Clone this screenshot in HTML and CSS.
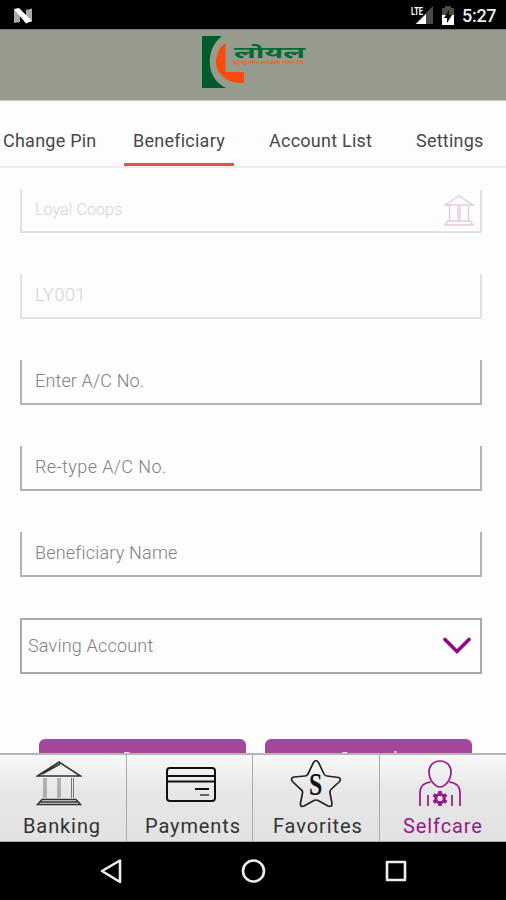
FILE: index.html
```html
<!DOCTYPE html>
<html lang="en">
<head>
<meta charset="utf-8">
<title>Beneficiary</title>
<link rel="stylesheet" href="styles.css">
</head>
<body>
<div class="status">
  <svg class="notif" width="20" height="16" viewBox="0 0 20 16"><path d="M1 1L7 5V14L1 15Z" fill="#aaa"/><path d="M13 2L19 .5V14L13 10Z" fill="#aaa"/><path d="M1 1L6 0L19 13L13 15.500Z" fill="#fff"/></svg>
  <svg width="72" height="20" viewBox="0 0 72 20">
    <path d="M23 0V18H5Z" fill="#484848"/><path d="M16 8V18H6Z" fill="#fff"/>
    <text class="lte" x="1" y="9" textLength="12" lengthAdjust="spacingAndGlyphs">LTE</text>
    <path d="M35 0H41V2H44V10H32V2H35Z" fill="#4a4a4a"/><path d="M32 9H44V19H32Z" fill="#fff"/><path d="M39 4L34 12H37V17L42 9H39Z" fill="#080808"/>
  </svg>
  <span class="clock">5:27</span>
</div>
<header class="brand">
  <svg width="108" height="58" viewBox="0 0 108 58">
    <path d="M2 2H22Q8 13 10 32Q12 47 26 54H2Z" fill="#005a2b"/>
    <path d="M25.500 9V38H44V49Q30 50 22 42Q15 35 16 25Q18 14 25.500 9Z" fill="#fa4a10"/>
    <text class="logo-name" x="34" y="24" textLength="71" lengthAdjust="spacingAndGlyphs">लोयल</text>
    <text class="logo-sub" x="33" y="30" textLength="72" lengthAdjust="spacingAndGlyphs">बहुउद्देश्यीय सहकारी संस्था लि.</text>
  </svg>
</header>
<nav class="tabs">
  <span class="tab pin">Change Pin</span><span class="tab ben">Beneficiary</span><span class="tab list">Account List</span><span class="tab set">Settings</span>
</nav>
<main class="form">
  <div class="field off first"><span class="f1">Loyal Coops</span>
    <svg width="30" height="32" viewBox="0 0 30 32" fill="none" stroke="#e4c8e0" stroke-width="1.300"><path d="M1 10L15 1L29 10ZM1 30H29L26 26H4ZM5.500 11V26M14 11V26M16 11V26M24.500 11V26"/></svg>
  </div>
  <div class="field off"><span class="f2">LY001</span></div>
  <div class="field"><span class="f3">Enter A/C No.</span></div>
  <div class="field"><span class="f4">Re-type A/C No.</span></div>
  <div class="field"><span class="f5">Beneficiary Name</span></div>
  <div class="select"><span>Saving Account</span>
    <svg width="28" height="18" viewBox="0 0 28 18"><path d="M2 2.500L14 14.500L26 2.500" fill="none" stroke="#8f0a86" stroke-width="3.600" stroke-linecap="round"/></svg>
  </div>
  <div class="actions"><div class="btn">Save</div><div class="btn">Cancel</div></div>
</main>
<footer class="bottom">
  <div class="item i1">
    <svg width="46" height="48" viewBox="0 0 46 48" fill="none" stroke="#333" stroke-width="1.500"><path d="M1.500 16L23 2L44.500 16ZM6 14L24 4M1.500 44.500H44.500L40 39.500H6ZM4 42H42"/><path d="M8 18V38M10 18V38M22 18V38M24 18V38M35.500 18V38M37.500 18V38" stroke="#777" stroke-width="1"/></svg>
    <span>Banking</span>
  </div>
  <div class="item i2">
    <svg width="50" height="48" viewBox="0 0 50 48" fill="none" stroke="#111" stroke-width="2"><rect x="1" y="8" width="48" height="33" rx="3"/><path d="M1 16H49M1 21.500H49"/><path d="M29 29H43"/><path d="M34 35H43" stroke="#666"/></svg>
    <span>Payments</span>
  </div>
  <div class="item i3">
    <svg width="52" height="48" viewBox="0 0 52 48" fill="none"><path d="M23.500 2.500Q26-1 28.500 2.500L34 14Q35 16 37 16L48.500 17.500Q52 19 49 22L41 29.500Q39.500 31 40 33L42 43.500Q42 47.500 38 46L28 40.500Q26 39.500 24 40.500L14 46Q10 47.500 10.500 43L12.500 33Q13 31 11 29.500L2.500 21.500Q0 18 4 17L15 16Q17 16 18 14Z" stroke="#222" stroke-width="1.700"/><text class="star-s" x="26" y="35" textLength="14" lengthAdjust="spacingAndGlyphs" text-anchor="middle">S</text></svg>
    <span>Favorites</span>
  </div>
  <div class="item i4 active">
    <svg width="44" height="48" viewBox="0 0 44 48" fill="none" stroke="#96188d" stroke-width="1.700"><path d="M22 1C29 1 33 6 33 12C33 20 27 27 22 27C17 27 11 20 11 12C11 6 15 1 22 1ZM13 22Q2 23 2 33V46M31 22Q42 23 42 33V46M10 35V46M34 35V46"/><circle cx="22" cy="38.500" r="4.200" stroke-width="3"/><path d="M22 31V34M22 43V46M15.500 34.750L18 36.200M26 40.800L28.500 42.250M15.500 42.250L18 40.800M26 36.200L28.500 34.750" stroke-width="3.600"/></svg>
    <span>Selfcare</span>
  </div>
</footer>
<div class="sysnav">
  <svg width="506" height="58" viewBox="0 0 506 58" fill="none" stroke="#eee" stroke-width="2.600" stroke-linejoin="round"><path d="M120 18.500V40L102 29Z"/><circle cx="253.500" cy="29" r="10.500"/><rect x="387" y="20" width="18" height="18"/></svg>
</div>
</body>
</html>
```

FILE: styles.css
```css
* { box-sizing: border-box; }
body { margin: 0; width: 506px; height: 900px; overflow: hidden; display: flex; flex-direction: column; background: #fdfdfd; font-family: Roboto, "Noto Sans", sans-serif; }
svg { display: block; flex: none; }
.status { height: 29px; flex: none; background: #000; display: flex; align-items: flex-start; padding: 6px 9px 0 13px; }
.notif { margin: 2px auto 0 0; }
.lte { font: bold 10px Roboto, sans-serif; fill: #fff; }
.clock { color: #eee; font-size: 18px; font-weight: 500; line-height: 20px; margin-left: -20px; width: 35px; white-space: nowrap; letter-spacing: -.3px; }
.brand { height: 72px; flex: none; background: #979b8d; border-top: 1px solid #777a70; border-bottom: 1px solid #c9c9c2; padding: 4px 0 0 200px; }
.logo-name { font: bold 16px "Noto Sans Devanagari", "Noto Sans", sans-serif; fill: #006b32; }
.logo-sub { font: bold 4.5px "Noto Sans Devanagari", "Noto Sans", sans-serif; fill: #f0622e; }
.tabs { height: 67px; flex: none; display: flex; border-bottom: 2px solid #ececec; font-size: 18px; line-height: 21px; color: #484848; white-space: nowrap; }
.tab { padding-top: 29px; height: 65px; letter-spacing: .24px; }
.pin { width: 124px; padding-left: 3px; }
.ben { width: 110px; padding-left: 9px; border-bottom: 3px solid #e85050; }
.list { width: 182px; padding-left: 35px; }
.form { height: 585px; flex: none; overflow: hidden; display: flex; flex-direction: column; gap: 41px; padding: 22px 24px 0 20px; }
.field { height: 45px; flex: none; border: solid #b2b2b2; border-width: 0 2px 2px; padding: 10px 5px 0 13px; display: flex; justify-content: space-between; font-size: 18px; font-weight: 300; line-height: 22px; color: #808080; letter-spacing: .3px; white-space: nowrap; }
.off { border-color: #e2e2e2; color: #d2d2d2; }
.f2 { letter-spacing: .6px; }
.f3 { letter-spacing: .15px; }
.f4 { letter-spacing: .4px; }
.f5 { letter-spacing: .2px; }
.first { height: 43px; font-size: 16px; padding: 9px 6px 0 13px; letter-spacing: .1px; }
.first svg { margin-top: -4px; }
.select { height: 56px; flex: none; border: 2px solid #a9a9a9; display: flex; align-items: center; justify-content: space-between; padding: 0 9px 0 6px; font-size: 18px; font-weight: 300; color: #808080; letter-spacing: .2px; }
.select span { margin-top: -2px; }
.actions { display: flex; gap: 19px; padding: 0 10px 0 19px; margin-top: 24px; }
.btn { flex: 1; height: 46px; border-radius: 6px; background: #a5479d; color: #fff; font-size: 18px; line-height: 40px; text-align: center; letter-spacing: .9px; }
.bottom { height: 89px; flex: none; display: grid; grid-template-columns: 127px 126px 127px 126px; background: linear-gradient(#f8f8f8 0, #e7e7e7 36px, #e2e2e2); border-top: 2px solid #b5b5b5; border-bottom: 1px solid #aaa; }
.item { border-right: 1px solid #aaa; display: flex; flex-direction: column; padding-top: 5px; font-size: 20px; line-height: 24px; color: #333; white-space: nowrap; letter-spacing: .9px; }
.item span { margin-top: 6px; }
.i1 svg { margin-left: 36px; } .i1 span { margin-left: 23px; }
.i2 svg { margin-left: 39px; } .i2 span { margin-left: 18px; }
.i3 svg { margin-left: 37px; } .i3 span { margin-left: 20px; }
.i4 svg { margin-left: 38px; } .i4 span { margin-left: 23px; }
.star-s { font: bold 31px "Liberation Serif", serif; fill: #111; }
.active { color: #96188d; border: 0; }
.sysnav { height: 58px; flex: none; background: #000; }
```
